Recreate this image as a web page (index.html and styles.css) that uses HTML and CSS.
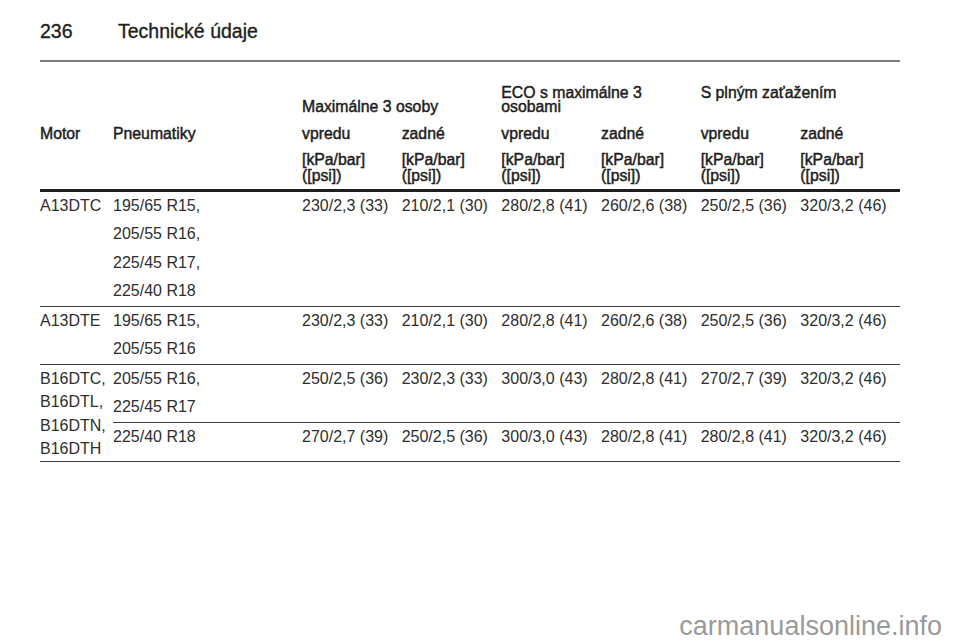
FILE: index.html
```html
<!DOCTYPE html>
<html lang="sk">
<head>
<meta charset="utf-8">
<title>236 Technické údaje</title>
<link rel="stylesheet" href="styles.css">
</head>
<body>
<div class="page">
  <header class="title">
    <span class="page-no">236</span>
    <span class="chapter">Technické údaje</span>
  </header>
  <div class="rule"></div>

  <div class="grid">
    <!-- header row 1 -->
    <div class="h1 span2"></div>
    <div class="h1 span2 bottom">Maximálne 3 osoby</div>
    <div class="h1 span2">ECO s maximálne 3<br>osobami</div>
    <div class="h1 span2">S plným zaťažením</div>

    <!-- header row 2 -->
    <div class="h2">Motor</div>
    <div class="h2">Pneumatiky</div>
    <div class="h2">vpredu</div>
    <div class="h2">zadné</div>
    <div class="h2">vpredu</div>
    <div class="h2">zadné</div>
    <div class="h2">vpredu</div>
    <div class="h2">zadné</div>

    <!-- header row 3 -->
    <div class="h3"></div>
    <div class="h3"></div>
    <div class="h3">[kPa/bar]<br>([psi])</div>
    <div class="h3">[kPa/bar]<br>([psi])</div>
    <div class="h3">[kPa/bar]<br>([psi])</div>
    <div class="h3">[kPa/bar]<br>([psi])</div>
    <div class="h3">[kPa/bar]<br>([psi])</div>
    <div class="h3">[kPa/bar]<br>([psi])</div>

    <!-- A13DTC -->
    <div class="td">A13DTC</div>
    <div class="td">
      <div>195/65 R15,</div>
      <div>205/55 R16,</div>
      <div>225/45 R17,</div>
      <div>225/40 R18</div>
    </div>
    <div class="td">230/2,3 (33)</div>
    <div class="td">210/2,1 (30)</div>
    <div class="td">280/2,8 (41)</div>
    <div class="td">260/2,6 (38)</div>
    <div class="td">250/2,5 (36)</div>
    <div class="td">320/3,2 (46)</div>

    <!-- A13DTE -->
    <div class="td">A13DTE</div>
    <div class="td">
      <div>195/65 R15,</div>
      <div>205/55 R16</div>
    </div>
    <div class="td">230/2,3 (33)</div>
    <div class="td">210/2,1 (30)</div>
    <div class="td">280/2,8 (41)</div>
    <div class="td">260/2,6 (38)</div>
    <div class="td">250/2,5 (36)</div>
    <div class="td">320/3,2 (46)</div>

    <!-- B16 group -->
    <div class="td motor-multi">
      <div>B16DTC,</div>
      <div>B16DTL,</div>
      <div>B16DTN,</div>
      <div>B16DTH</div>
    </div>
    <div class="td">
      <div>205/55 R16,</div>
      <div>225/45 R17</div>
    </div>
    <div class="td">250/2,5 (36)</div>
    <div class="td">230/2,3 (33)</div>
    <div class="td">300/3,0 (43)</div>
    <div class="td">280/2,8 (41)</div>
    <div class="td">270/2,7 (39)</div>
    <div class="td">320/3,2 (46)</div>

    <div class="td last">225/40 R18</div>
    <div class="td last">270/2,7 (39)</div>
    <div class="td last">250/2,5 (36)</div>
    <div class="td last">300/3,0 (43)</div>
    <div class="td last">280/2,8 (41)</div>
    <div class="td last">280/2,8 (41)</div>
    <div class="td last">320/3,2 (46)</div>
  </div>
</div>
<div class="watermark">carmanualsonline.info</div>
</body>
</html>
```

FILE: styles.css
```css
html, body {
  margin: 0;
  padding: 0;
  background: #ffffff;
}

body {
  width: 960px;
  height: 642px;
  position: relative;
  overflow: hidden;
  font-family: "Liberation Sans", Arial, sans-serif;
  color: #2b2b2b;
}

.page {
  padding: 18.5px 60px 0 40px;
}

.title {
  display: flex;
  font-size: 19.5px;
  line-height: 24px;
  color: #1e1e1e;
  -webkit-text-stroke: 0.35px #1e1e1e;
}

.page-no {
  width: 78px;
}

.rule {
  margin-top: 17.5px;
  height: 2px;
  background: #7a7a7a;
}

.grid {
  display: grid;
  grid-template-columns: 73px 189px repeat(6, 1fr);
}

.span2 {
  grid-column: span 2;
}

.h1, .h2, .h3 {
  font-size: 15.8px;
  line-height: 14.5px;
  color: #1c1c1c;
  -webkit-text-stroke: 0.45px #1c1c1c;
}

.h1 {
  padding-top: 23.5px;
}

.h1.bottom {
  align-self: end;
}

.h2 {
  padding-top: 12.25px;
}

.h3 {
  padding-top: 10.75px;
  padding-bottom: 4.5px;
  line-height: 16px;
  border-bottom: 3px solid #1e1e1e;
}

.td {
  font-size: 16px;
  line-height: 28.5px;
  color: #2e2e2e;
  border-bottom: 1px solid #3a3a3a;
  white-space: nowrap;
}

.motor-multi {
  grid-row: span 2;
  line-height: 23.2px;
  padding-top: 2.7px;
}

.last {
  min-height: 39.5px;
  box-sizing: border-box;
}

.watermark {
  position: absolute;
  right: 18px;
  bottom: 2px;
  font-family: "Liberation Sans", Arial, sans-serif;
  font-size: 27px;
  line-height: 27px;
  color: #9a9a9a;
}
```
